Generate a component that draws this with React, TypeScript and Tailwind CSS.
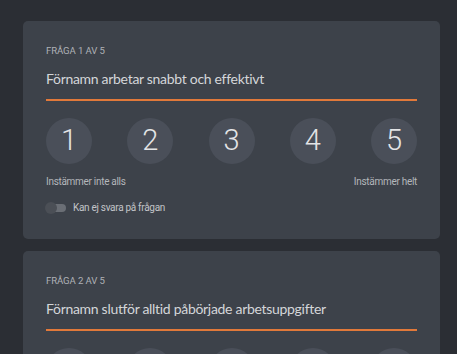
import { useState } from "react";

const questions = [
  "Förnamn arbetar snabbt och effektivt",
  "Förnamn slutför alltid påbörjade arbetsuppgifter",
];

function Question({ index, text }: { index: number; text: string }) {
  const [skip, setSkip] = useState(false);
  return (
    <div className="w-[417px] rounded-[5px] bg-[#3d424a] px-[23px] pt-[24px] pb-[25px]">
      <p className="text-[9.6px] leading-[11px] uppercase text-[#aeb1b6] font-['Roboto',sans-serif] tracking-[-0.1px]">
        Fråga {index} av 5
      </p>
      <p className="mt-[14px] text-[14px] leading-[18px] tracking-[-0.3px] text-[#d4d6d9] font-['Lato',sans-serif]">
        {text}
      </p>
      <div className="mt-[11px] h-[2px] bg-[#e2793a]" />
      <div className="mt-[17px] flex justify-between">
        {[1, 2, 3, 4, 5].map((n) => (
          <button
            key={n}
            className="w-[46px] h-[46px] rounded-full bg-[#4a4f59] grid place-items-center text-[29px] font-light text-[#e3e4e6] font-['Roboto',sans-serif]"
          >
            {n}
          </button>
        ))}
      </div>
      <div className="mt-[12px] flex justify-between text-[10px] leading-[11px] tracking-[-0.3px] text-[#b4b7bb] font-['Roboto',sans-serif]">
        <span>Instämmer inte alls</span>
        <span>Instämmer helt</span>
      </div>
      <div className="mt-[15px] flex items-center gap-[7px]">
        <button
          onClick={() => setSkip((s) => !s)}
          className="relative w-[20px] h-[8px] rounded-full bg-[#6a6e75]"
        >
          <span
            className={
              skip
                ? "absolute top-[-2px] right-[-1px] w-[12px] h-[12px] rounded-full bg-[#e2793a]"
                : "absolute top-[-2px] left-[-1px] w-[12px] h-[12px] rounded-full bg-[#4b4f56]"
            }
          />
        </button>
        <span className="text-[10px] leading-[12px] tracking-[-0.3px] text-[#c2c4c8] font-['Roboto',sans-serif]">
          Kan ej svara på frågan
        </span>
      </div>
    </div>
  );
}

export default function App() {
  return (
    <div className="h-screen bg-[#2b2e34] pt-[21px] pl-[23px] overflow-hidden">
      <div className="flex flex-col gap-[12px]">
        {questions.map((q, i) => (
          <Question key={i} index={i + 1} text={q} />
        ))}
      </div>
    </div>
  );
}
